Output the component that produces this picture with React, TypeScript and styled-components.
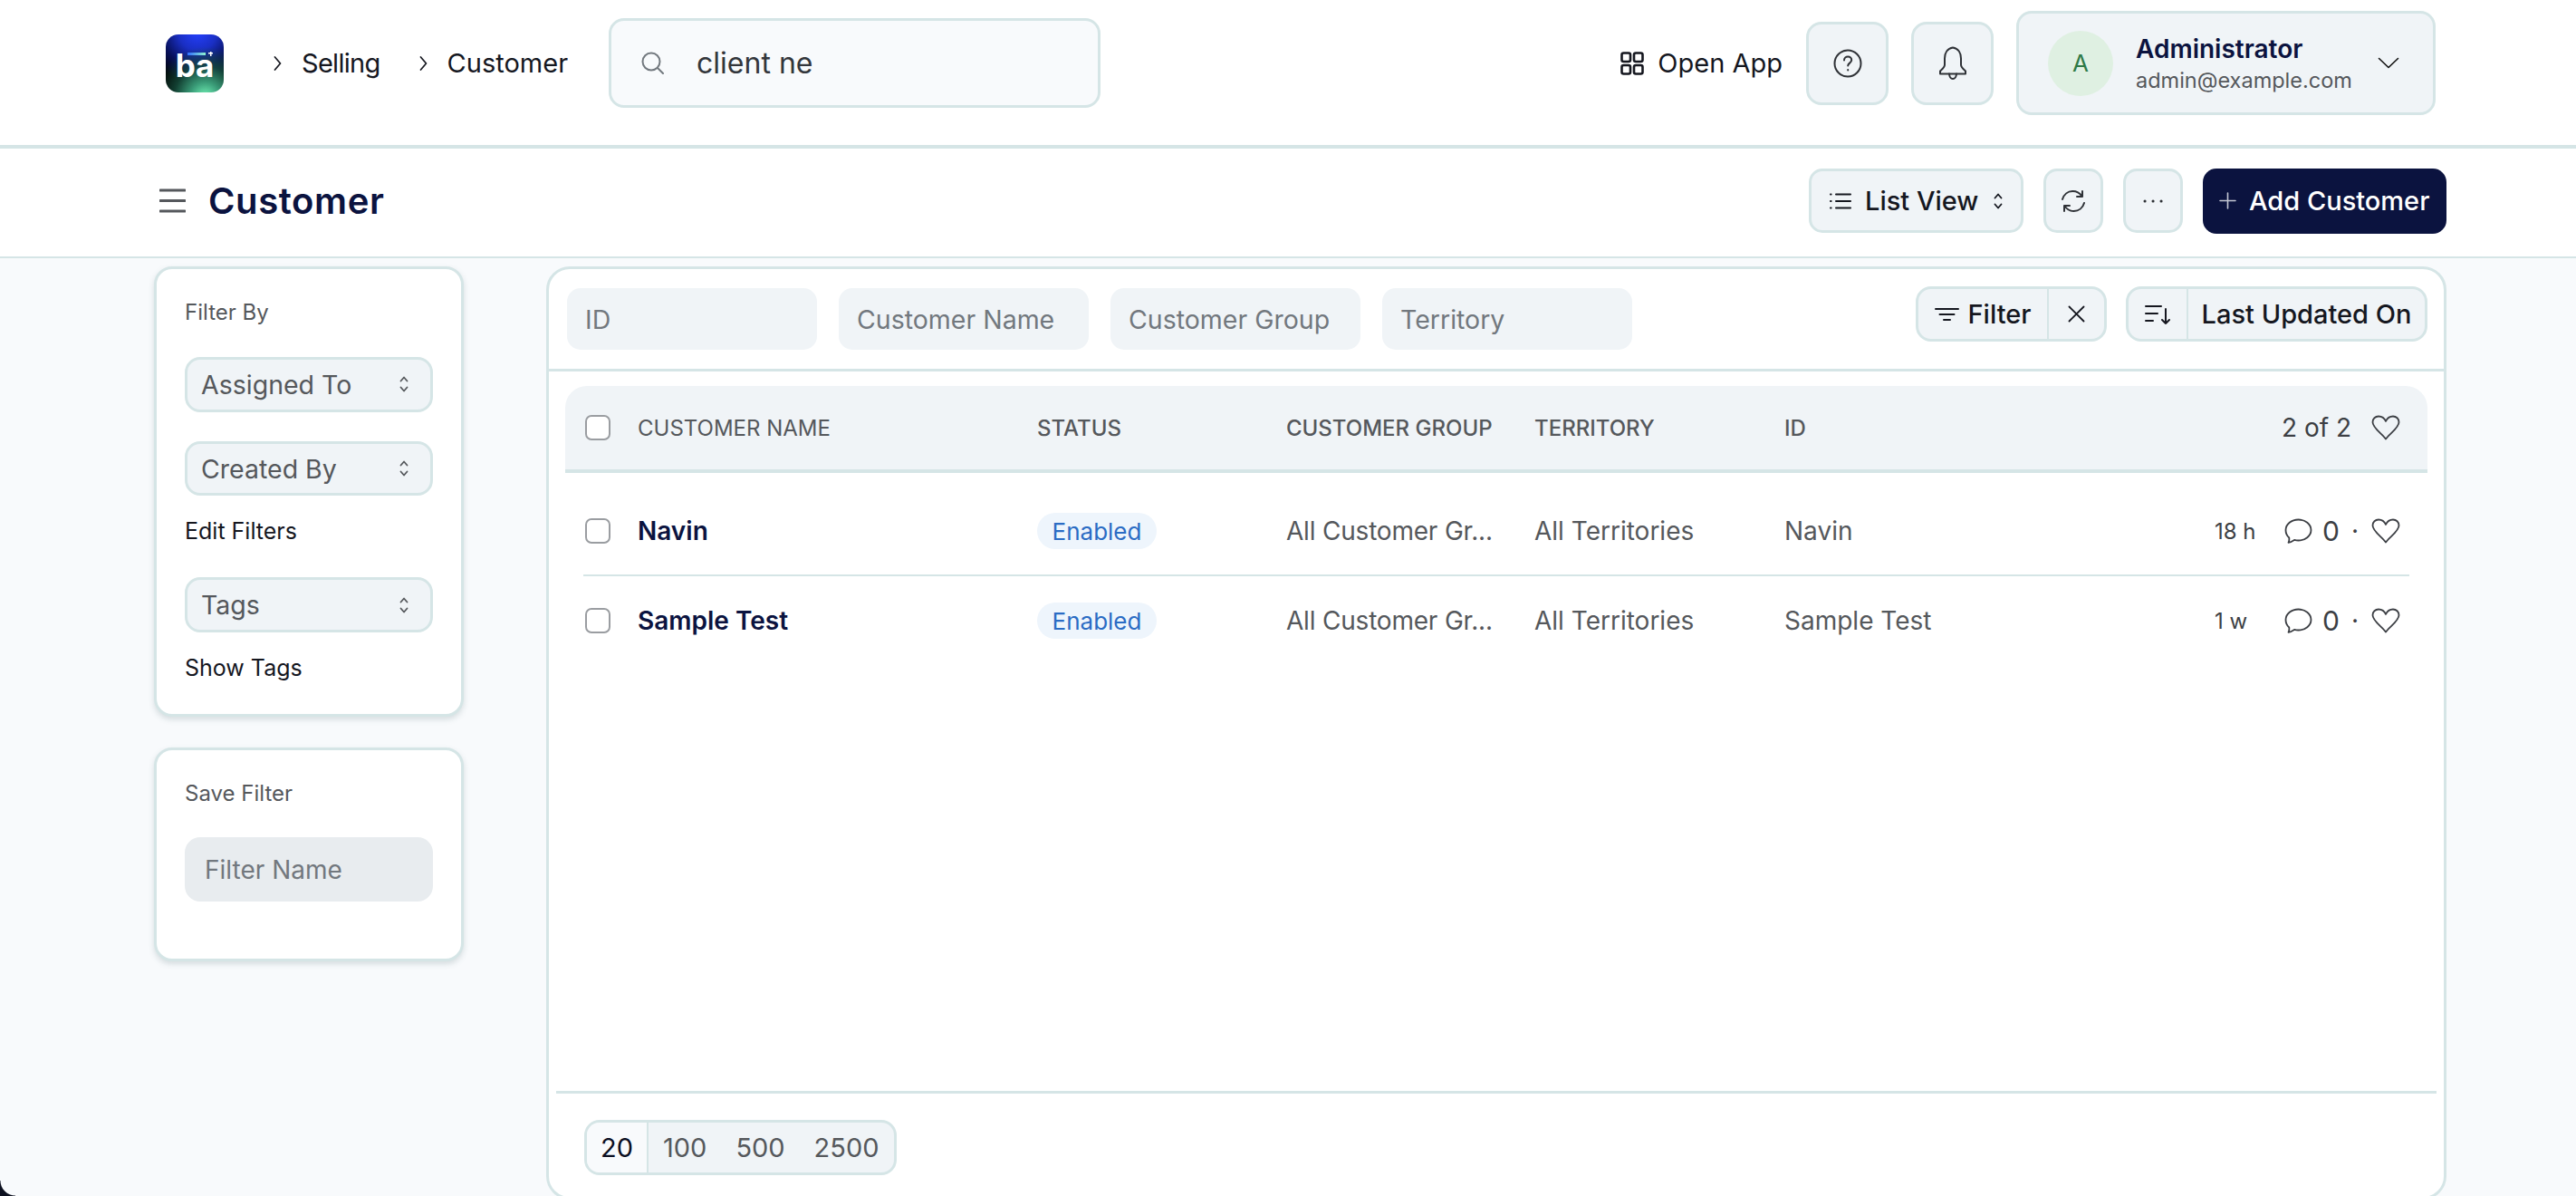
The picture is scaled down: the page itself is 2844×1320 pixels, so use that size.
import React from "react";
import styled, { createGlobalStyle } from "styled-components";

const line = "#d5e5e6";
const navy = "#0b133f";
const soft = "#f0f4f7";

const GlobalStyle = createGlobalStyle`
  html, body {
    margin: 0;
    padding: 0;
    background: #f8fafc;
    font-family: "Inter", "Liberation Sans", sans-serif;
    color: #111;
  }
  * { box-sizing: border-box; }
  svg { display: block; flex: none; }
`;

const Page = styled.div`
  position: relative;
  width: 2844px;
  height: 1320px;
  overflow: hidden;
  background: #f8fafc;
`;

const Corner = styled.div`
  position: absolute;
  left: 0;
  bottom: 0;
  width: 17px;
  height: 17px;
  background: radial-gradient(circle at 100% 0, transparent 16px, #0d1120 17px);
`;

const TopBar = styled.header`
  display: flex;
  align-items: center;
  height: 164px;
  padding: 0 155px 21px 183px;
  background: #fff;
  border-bottom: 4px solid ${line};
`;

const Logo = styled.div`
  position: relative;
  display: flex;
  align-items: center;
  justify-content: center;
  width: 64px;
  height: 64px;
  border-radius: 14px;
  background:
    radial-gradient(circle at 68% 108%, #74f5b8 0%, #3a9c78 20%, rgba(24, 84, 66, 0.75) 42%, transparent 68%),
    radial-gradient(circle at 55% -6%, #2540ff 0%, #1a2fc4 28%, #07105a 52%, transparent 76%),
    #000;
`;

const LogoText = styled.span`
  margin-top: 6px;
  color: #fff;
  font-size: 35px;
  line-height: 1;
  font-weight: 700;
`;

const LogoBar = styled.span`
  position: absolute;
  top: 20px;
  left: 24px;
  width: 20px;
  height: 3px;
  background: linear-gradient(90deg, #2f6cff, #8ef3cf);
`;

const LogoStar = styled.span`
  position: absolute;
  top: 19px;
  left: 47px;
  width: 5px;
  height: 5px;
  background:
    linear-gradient(#fff, #fff) center / 5px 1.5px no-repeat,
    linear-gradient(#fff, #fff) center / 1.5px 5px no-repeat;
`;

const Crumbs = styled.nav`
  display: flex;
  align-items: center;
  margin-left: 55px;
  gap: 43px;
`;

const Crumb = styled.a<{ $ls?: number }>`
  display: flex;
  align-items: center;
  gap: 22px;
  font-size: 29px;
  letter-spacing: ${(p) => p.$ls ?? 0}px;
  color: #15171f;
`;

const Search = styled.div`
  display: flex;
  align-items: center;
  gap: 36px;
  width: 543px;
  height: 99px;
  margin-left: 45px;
  padding: 0 0 0 33px;
  background: #f8fafc;
  border: 3px solid ${line};
  border-radius: 17px;
  font-size: 32px;
  color: #33363b;
`;

const Spacer = styled.div`
  flex: 1;
`;

const OpenApp = styled.a`
  display: flex;
  align-items: center;
  gap: 15px;
  margin-right: 26px;
  font-size: 29px;
  color: #15171f;
`;

const IconButton = styled.button<{ $w: number; $h: number }>`
  display: flex;
  align-items: center;
  justify-content: center;
  width: ${(p) => p.$w}px;
  height: ${(p) => p.$h}px;
  padding: 0;
  background: ${soft};
  border: 3px solid ${line};
  border-radius: 17px;
  color: #2f3237;
`;

const BellButton = styled(IconButton)`
  margin: 0 25px;
`;

const UserMenu = styled.div`
  display: flex;
  align-items: center;
  width: 463px;
  height: 115px;
  padding: 0 37px 0 32px;
  background: ${soft};
  border: 3px solid ${line};
  border-radius: 17px;
`;

const Avatar = styled.div`
  display: flex;
  align-items: center;
  justify-content: center;
  width: 72px;
  height: 72px;
  margin-right: 25px;
  border-radius: 50%;
  background: #dff0e2;
  color: #2f7a47;
  font-size: 26px;
`;

const UserText = styled.div`
  flex: 1;
  display: flex;
  flex-direction: column;
  gap: 4px;
  padding-top: 3px;
`;

const UserName = styled.div`
  font-size: 28px;
  line-height: 32px;
  font-weight: 600;
  color: ${navy};
`;

const UserMail = styled.div`
  font-size: 23.5px;
  line-height: 30px;
  color: #55585c;
`;

const PageBar = styled.div`
  display: flex;
  align-items: center;
  height: 121px;
  padding: 0 143px 4px 176px;
  background: #fff;
  border-bottom: 2px solid ${line};
`;

const Menu = styled.div`
  color: #55585c;
`;

const Title = styled.h1`
  margin: 0 0 0 25px;
  font-size: 40px;
  line-height: 48px;
  font-weight: 600;
  color: ${navy};
  letter-spacing: 0.6px;
`;

const Actions = styled.div`
  display: flex;
  align-items: center;
  gap: 22px;
`;

const ViewButton = styled.button`
  display: flex;
  align-items: center;
  width: 237px;
  height: 71px;
  padding: 0 20px;
  background: ${soft};
  border: 3px solid ${line};
  border-radius: 15px;
  font: inherit;
  font-size: 29px;
  font-weight: 500;
  color: #15171f;
`;

const ViewLabel = styled.span`
  flex: 1;
  margin-left: 15px;
  text-align: left;
`;

const SmallButton = styled(IconButton)`
  border-radius: 15px;
`;

const AddButton = styled.button`
  display: flex;
  align-items: center;
  gap: 14px;
  width: 269px;
  height: 72px;
  padding: 0 18px;
  background: ${navy};
  border: none;
  border-radius: 15px;
  font: inherit;
  font-size: 29px;
  font-weight: 500;
  color: #fff;
  white-space: nowrap;
`;

const PlusWrap = styled.span`
  color: #c4c7d3;
`;

const Body = styled.div`
  display: flex;
  align-items: flex-start;
  gap: 91px;
  padding: 9px 0 0 170px;
`;

const Side = styled.aside`
  display: flex;
  flex-direction: column;
  gap: 34px;
  width: 342px;
`;

const SideCard = styled.section<{ $h: number }>`
  display: flex;
  flex-direction: column;
  align-items: stretch;
  height: ${(p) => p.$h}px;
  padding: 34px 31px 0;
  background: #fff;
  border: 3px solid ${line};
  border-radius: 20px;
  box-shadow: 0 3px 6px rgba(90, 120, 125, 0.22);
`;

const SideLabel = styled.div`
  margin-bottom: 35px;
  font-size: 24px;
  line-height: 28px;
  color: #55585c;
`;

const Select = styled.div`
  display: flex;
  align-items: center;
  justify-content: space-between;
  height: 61px;
  padding: 0 24px 0 15px;
  background: ${soft};
  border: 3px solid ${line};
  border-radius: 17px;
  font-size: 28.5px;
  color: #55585c;
  & + & {
    margin-top: 32px;
  }
`;

const SideLink = styled.a`
  margin: 24px 0 36px;
  font-size: 25px;
  line-height: 30px;
  color: #15171f;
`;

const FilterNameBox = styled.div`
  display: flex;
  align-items: center;
  height: 71px;
  margin-top: -1px;
  padding-left: 22px;
  background: #e8ecef;
  border-radius: 17px;
  font-size: 28px;
  color: #72787e;
`;

const ListCard = styled.main`
  display: flex;
  flex-direction: column;
  width: 2098px;
  height: 1030px;
  background: #fff;
  border: 3px solid ${line};
  border-radius: 26px;
`;

const FilterRow = styled.div`
  display: flex;
  align-items: flex-start;
  height: 113px;
  padding: 21px 18px 0 20px;
  border-bottom: 3px solid ${line};
`;

const FieldGroup = styled.div`
  flex: 1;
  display: flex;
  gap: 24px;
`;

const Field = styled.div`
  display: flex;
  align-items: center;
  width: 276px;
  height: 68px;
  padding-left: 20px;
  background: ${soft};
  border-radius: 15px;
  font-size: 28.5px;
  color: #72787e;
`;

const Combo = styled.div`
  display: flex;
  align-items: stretch;
  height: 61px;
  margin-top: -2px;
  margin-left: 21px;
  background: ${soft};
  border: 3px solid ${line};
  border-radius: 17px;
  font-size: 29px;
  font-weight: 500;
  color: #15171f;
`;

const ComboPart = styled.div<{ $w: number }>`
  display: flex;
  align-items: center;
  justify-content: center;
  gap: 10px;
  width: ${(p) => p.$w}px;
  white-space: nowrap;
  & + & {
    border-left: 2px solid ${line};
  }
`;

const Table = styled.div`
  flex: 1;
  display: flex;
  flex-direction: column;
  margin: 16px 18px 0 18px;
`;

const HeadRow = styled.div`
  display: grid;
  grid-template-columns: 58px 441px 275px 274px 276px 1fr;
  align-items: center;
  height: 96px;
  padding: 0 30px 0 22px;
  background: ${soft};
  border-bottom: 4px solid ${line};
  border-radius: 24px 24px 0 0;
  font-size: 24px;
  font-weight: 500;
  color: #55585c;
`;

const LightHead = styled.span`
  font-weight: 400;
`;

const Box = styled.div`
  width: 28px;
  height: 28px;
  background: #fff;
  border: 2.5px solid #9a9da1;
  border-radius: 7px;
`;

const Rows = styled.div`
  margin-top: 16px;
`;

const Row = styled.div`
  display: grid;
  grid-template-columns: 58px 441px 275px 274px 276px 1fr;
  align-items: center;
  height: 98px;
  margin: 0 20px;
  padding: 0 10px 0 2px;
  border-bottom: 2px solid ${line};
  font-size: 28px;
  color: #55585c;
  &:last-child {
    border-bottom: none;
  }
`;

const RowName = styled.a`
  font-weight: 600;
  color: ${navy};
`;

const Pill = styled.span`
  display: inline-flex;
  align-items: center;
  justify-content: center;
  width: 132px;
  height: 40px;
  border-radius: 20px;
  background: #eef5fc;
  color: #2b6cc4;
  font-size: 26px;
`;

const Clip = styled.div`
  white-space: nowrap;
  letter-spacing: -0.2px;
`;

const Meta = styled.div`
  display: flex;
  align-items: center;
  color: #3c3f44;
`;

const IdCell = styled.span`
  flex: 1;
  color: #55585c;
`;

const Count = styled.span`
  margin-right: 22px;
  font-size: 28px;
  font-weight: 400;
`;

const Time = styled.span`
  width: 77px;
  font-size: 24px;
`;

const Zero = styled.span`
  width: 18px;
  margin: 0 14px 0 11px;
  font-size: 30px;
`;

const Dot = styled.span`
  width: 22px;
  font-size: 28px;
`;

const Footer = styled.div`
  height: 117px;
  margin: 0 8px;
  padding: 29px 0 0 31px;
  border-top: 3px solid ${line};
`;

const Pager = styled.div`
  display: inline-flex;
  width: 345px;
  height: 61px;
  background: ${soft};
  border: 3px solid ${line};
  border-radius: 17px;
  overflow: hidden;
  font-size: 29px;
  color: #55585c;
`;

const ActiveSize = styled.span`
  display: flex;
  align-items: center;
  padding: 0 15px;
  background: #f8fafc;
  border-right: 2px solid ${line};
  color: #0b0f22;
`;

const OtherSizes = styled.div`
  display: flex;
  align-items: center;
  gap: 32px;
  padding-left: 16px;
`;

type IconProps = { w: number; h: number; sw?: number; children: React.ReactNode };

const Icon = ({ w, h, sw = 2, children }: IconProps) => (
  <svg
    width={w}
    height={h}
    viewBox={`0 0 ${w} ${h}`}
    fill="none"
    stroke="currentColor"
    strokeWidth={sw}
    strokeLinecap="round"
    strokeLinejoin="round"
  >
    {children}
  </svg>
);

const Chevron = () => (
  <Icon w={9} h={16} sw={1.7}>
    <path d="M1.500 1l6 7-6 7" />
  </Icon>
);

const SearchIcon = () => (
  <svg width="25" height="25" viewBox="0 0 25 25" fill="none" stroke="#72787e" strokeWidth="2" strokeLinecap="round">
    <circle cx="11" cy="11" r="9.500" />
    <path d="M18 18l6 6" />
  </svg>
);

const GridIcon = () => (
  <Icon w={26} h={26} sw={2.6}>
    <rect x="1.500" y="1.500" width="9.500" height="9.500" rx="2" />
    <rect x="15" y="1.500" width="9.500" height="9.500" rx="2" />
    <rect x="1.500" y="15" width="9.500" height="9.500" rx="2" />
    <rect x="15" y="15" width="9.500" height="9.500" rx="2" />
  </Icon>
);

const HelpIcon = () => (
  <Icon w={32} h={32} sw={2}>
    <circle cx="16" cy="16" r="14.500" />
    <path d="M12 12.500c0-2.500 2-4 4.200-4s4 1.500 4 3.700c0 3.300-4 3.500-4 6.300" />
    <path d="M16.200 23v.4" />
  </Icon>
);

const BellIcon = () => (
  <Icon w={32} h={38} sw={2}>
    <path d="M16 1.500c-6 1-9 6-9 12v7c0 3-3 5-5 7v3h28v-3c-2-2-5-4-5-7v-7c0-6-3-11-9-12z" />
    <path d="M12 30.500c.3 3.500 2 5.500 4 5.500s3.700-2 4-5.500" />
  </Icon>
);

const DownIcon = () => (
  <Icon w={24} h={13} sw={1.6}>
    <path d="M1.500 1.500L12 11.500 22.500 1.500" />
  </Icon>
);

const HamburgerIcon = () => (
  <Icon w={29} h={27} sw={3}>
    <path d="M1 2h27M1 13.500h27M1 25h27" />
  </Icon>
);

const ListIcon = () => (
  <Icon w={24} h={18} sw={2}>
    <path d="M7 1.500h16M7 9h16M7 16.500h16M1 1.500h.6M1 9h.6M1 16.500h.6" />
  </Icon>
);

const UpDownIcon = () => (
  <Icon w={10} h={18} sw={1.8}>
    <path d="M1.500 5.500L5 1.500l3.500 4M1.500 12.500L5 16.500l3.500-4" />
  </Icon>
);

const RefreshIcon = () => (
  <Icon w={30} h={26} sw={2}>
    <path d="M3 11C4.500 5.500 9 2 14.500 2c4 0 7.500 2 10 5.500" />
    <path d="M27 15c-1.500 5.500-6 9-11.500 9-4 0-7.500-2-10-5.500" />
    <path d="M25 2v6h-6M5 24v-6h6" />
  </Icon>
);

const DotsIcon = () => (
  <Icon w={22} h={4} sw={3}>
    <path d="M2 2h.1M11 2h.1M20 2h.1" />
  </Icon>
);

const PlusIcon = () => (
  <Icon w={19} h={19} sw={1.6}>
    <path d="M9.500 1v17M1 9.500h17" />
  </Icon>
);

const FilterIcon = () => (
  <Icon w={27} h={16} sw={2}>
    <path d="M1 2h25M5.500 8h16M10 14h7" />
  </Icon>
);

const CloseIcon = () => (
  <Icon w={19} h={19} sw={1.8}>
    <path d="M1.500 1.500l16 16M17.500 1.500l-16 16" />
  </Icon>
);

const SortIcon = () => (
  <Icon w={28} h={22} sw={2}>
    <path d="M1 2h17M1 10h13M1 18h8M23 5v16M19 17l4 4 4-4" />
  </Icon>
);

const HeartIcon = () => (
  <Icon w={32} h={28} sw={1.8}>
    <path d="M16 26.500C12.500 21 1.500 14.500 1.500 8 1.500 4 4.500 1.500 8 1.500c3.500 0 6.500 2 8 5.500 1.500-3.500 4.500-5.500 8-5.500 3.500 0 6.500 2.500 6.500 6.500 0 6.500-11 13-14.500 18.500z" />
  </Icon>
);

const CommentIcon = () => (
  <Icon w={31} h={28} sw={1.8}>
    <path d="M15.500 1.500c7.500 0 14 5 14 11.500s-6.500 11.500-14 11.500c-1.500 0-3-.2-4.500-.6-2 1.300-4.500 2.600-6.500 3 .8-1.600 1-3.600.8-5.400C3 19.500 1.500 16.500 1.500 13 1.500 6.500 8 1.500 15.500 1.500z" />
  </Icon>
);

const people = [
  { name: "Navin", time: "18 h" },
  { name: "Sample Test", time: "1 w" },
];

export default function App() {
  return (
    <Page>
      <GlobalStyle />
      <TopBar>
        <Logo>
          <LogoText>ba</LogoText>
          <LogoBar />
          <LogoStar />
        </Logo>
        <Crumbs>
          <Crumb $ls={-0.7}>
            <Chevron />
            Selling
          </Crumb>
          <Crumb>
            <Chevron />
            Customer
          </Crumb>
        </Crumbs>
        <Search>
          <SearchIcon />
          client ne
        </Search>
        <Spacer />
        <OpenApp>
          <GridIcon />
          Open App
        </OpenApp>
        <IconButton $w={91} $h={92}>
          <HelpIcon />
        </IconButton>
        <BellButton $w={91} $h={92}>
          <BellIcon />
        </BellButton>
        <UserMenu>
          <Avatar>A</Avatar>
          <UserText>
            <UserName>Administrator</UserName>
            <UserMail>admin@example.com</UserMail>
          </UserText>
          <DownIcon />
        </UserMenu>
      </TopBar>

      <PageBar>
        <Menu>
          <HamburgerIcon />
        </Menu>
        <Title>Customer</Title>
        <Spacer />
        <Actions>
          <ViewButton>
            <ListIcon />
            <ViewLabel>List View</ViewLabel>
            <UpDownIcon />
          </ViewButton>
          <SmallButton $w={66} $h={71}>
            <RefreshIcon />
          </SmallButton>
          <SmallButton $w={66} $h={71}>
            <DotsIcon />
          </SmallButton>
          <AddButton>
            <PlusWrap>
              <PlusIcon />
            </PlusWrap>
            Add Customer
          </AddButton>
        </Actions>
      </PageBar>

      <Body>
        <Side>
          <SideCard $h={497}>
            <SideLabel>Filter By</SideLabel>
            <Select>
              Assigned To
              <UpDownIcon />
            </Select>
            <Select>
              Created By
              <UpDownIcon />
            </Select>
            <SideLink>Edit Filters</SideLink>
            <Select>
              Tags
              <UpDownIcon />
            </Select>
            <SideLink>Show Tags</SideLink>
          </SideCard>
          <SideCard $h={236}>
            <SideLabel>Save Filter</SideLabel>
            <FilterNameBox>Filter Name</FilterNameBox>
          </SideCard>
        </Side>

        <ListCard>
          <FilterRow>
            <FieldGroup>
              <Field>ID</Field>
              <Field>Customer Name</Field>
              <Field>Customer Group</Field>
              <Field>Territory</Field>
            </FieldGroup>
            <Combo>
              <ComboPart $w={142}>
                <FilterIcon />
                Filter
              </ComboPart>
              <ComboPart $w={63}>
                <CloseIcon />
              </ComboPart>
            </Combo>
            <Combo>
              <ComboPart $w={64}>
                <SortIcon />
              </ComboPart>
              <ComboPart $w={263}>Last Updated On</ComboPart>
            </Combo>
          </FilterRow>

          <Table>
            <HeadRow>
              <Box />
              <LightHead>CUSTOMER NAME</LightHead>
              <span>STATUS</span>
              <span>CUSTOMER GROUP</span>
              <span>TERRITORY</span>
              <Meta>
                <IdCell>ID</IdCell>
                <Count>2 of 2</Count>
                <HeartIcon />
              </Meta>
            </HeadRow>
            <Rows>
              {people.map((p) => (
                <Row key={p.name}>
                  <Box />
                  <RowName>{p.name}</RowName>
                  <div>
                    <Pill>Enabled</Pill>
                  </div>
                  <Clip>All Customer Gr...</Clip>
                  <div>All Territories</div>
                  <Meta>
                    <IdCell>{p.name}</IdCell>
                    <Time>{p.time}</Time>
                    <CommentIcon />
                    <Zero>0</Zero>
                    <Dot>·</Dot>
                    <HeartIcon />
                  </Meta>
                </Row>
              ))}
            </Rows>
          </Table>

          <Footer>
            <Pager>
              <ActiveSize>20</ActiveSize>
              <OtherSizes>
                <span>100</span>
                <span>500</span>
                <span>2500</span>
              </OtherSizes>
            </Pager>
          </Footer>
        </ListCard>
      </Body>
      <Corner />
    </Page>
  );
}
